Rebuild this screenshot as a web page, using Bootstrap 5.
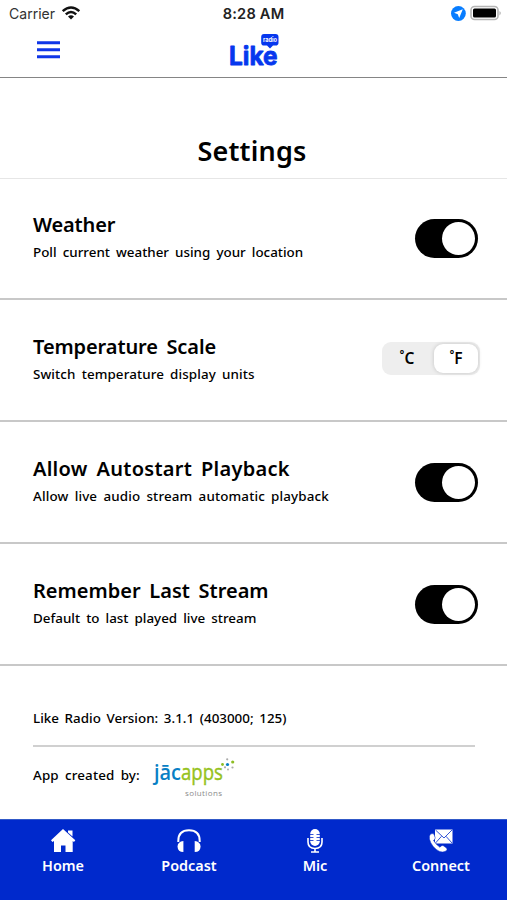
<!DOCTYPE html>
<html lang="en">
<head>
<meta charset="utf-8">
<meta name="viewport" content="width=device-width, initial-scale=1">
<title>Settings</title>
<link href="https://cdn.jsdelivr.net/npm/bootstrap@5.3.0/dist/css/bootstrap.min.css" rel="stylesheet">
<style>
body{font-family:"Noto Sans","Open Sans",sans-serif;color:#000;background:#fff;height:900px;overflow:hidden}
svg{display:block}
svg text{white-space:pre}
.status-bar{height:28px;font-family:Inter,"Liberation Sans",sans-serif;font-size:14.6px;color:#222}
.side{width:190px}
.status-time{font-weight:600;font-size:14.6px;letter-spacing:.2px;padding-top:1px}
.app-bar{height:50px;border-bottom:1px solid #858585}
.menu-btn{margin-left:37px}
.page-title{height:101px;border-bottom:1px solid #e6e6e6;padding-top:51px}
.page-title h1{font-size:27px;font-weight:600;line-height:44px;letter-spacing:.2px;margin-right:3px}
.setting{height:122px;border-bottom:2px solid #c8c8c8;padding:33px 29px 0 33px}
.setting.first{height:121px;padding-top:32px}
.setting h2{font-size:20px;line-height:28px;font-weight:600;margin:0;white-space:nowrap;word-spacing:3.5px}
.setting.first h2{letter-spacing:-.15px}
.setting p,.info{font-size:13.4px;line-height:20px;font-weight:500;white-space:nowrap;word-spacing:2.6px}
.setting p{margin-top:3px}
.temperature h2{letter-spacing:-.1px}
.temperature p{letter-spacing:.1px}
.autostart h2{letter-spacing:.26px}
.autostart p{letter-spacing:.14px}
.toggle{width:63px;height:39px;border-radius:20px;background:#000;padding:3px;margin-top:8px}
.knob{width:33px;height:33px;border-radius:50%;background:#fff}
.units{width:98px;height:33px;border-radius:9px;background:#eee;margin-top:9px;padding:2px;margin-right:-2px;font-size:15.5px;font-weight:600}
.units .on{background:#fff;border-radius:9px;box-shadow:0 0 4px rgba(0,0,0,.18);flex:0 0 44px}
.unit-c{padding-right:4px}
.info-row{margin:0 32px 0 33px}
.version{height:81px;border-bottom:2px solid #d0d0d0;padding-top:42px;word-spacing:2.2px}
.credit{padding-top:18px;letter-spacing:.14px}
.maker{margin-left:10px}
.tabs{height:81px;background:#0029cc;border-top:1px solid #3159c8;padding:7px 3px 0 0;color:#fff;font-weight:600;font-size:14.4px;line-height:20px}
.tabs svg{margin-bottom:1px}
</style>
</head>
<body class="d-flex flex-column">
<div class="status-bar d-flex align-items-center justify-content-between">
  <div class="side d-flex align-items-center ps-2">
    <svg width="76" height="28" viewBox="0 0 76 28"><text x="1" y="18.7" font-size="14.5" fill="#333" textLength="46" lengthAdjust="spacingAndGlyphs">Carrier</text>
    <g fill="none" stroke="#111" stroke-width="2.5"><path d="M54.7 11.1Q63 3.9 71.3 11.1"/><path d="M57.8 14.4Q63 9.7 68.2 14.4"/></g><path d="M60 16.5Q63 14.1 66 16.5L63 19.6Z" fill="#111"/></svg>
  </div>
  <span class="status-time">8:28 AM</span>
  <div class="side d-flex justify-content-end pe-1">
    <svg width="54" height="28" viewBox="449 0 54 28"><circle cx="458.4" cy="13.5" r="7.4" fill="#087dff"/><path d="M462.8 9.2L459.2 18L457.8 14.2L454 12.8Z" fill="#fff"/><rect x="471" y="6.5" width="27" height="13" rx="3.5" fill="#fff" stroke="#b5b5b5" stroke-width="1.6"/><rect x="473" y="8.5" width="23" height="9" rx="1.5" fill="#000"/><path d="M499.5 11Q502 13 499.5 15.4Z" fill="#aaa"/></svg>
  </div>
</div>
<header class="app-bar d-flex align-items-start justify-content-between">
  <div class="side"><svg class="menu-btn" width="24" height="44" viewBox="0 0 24 44"><path d="M0 14.7H23M0 21.7H23M0 28.7H23" stroke="#0f36e8" stroke-width="3"/></svg></div>
  <svg width="54" height="44" viewBox="227 28 54 44">
    <text x="229" y="64.5" font-family="Inter,sans-serif" font-weight="700" font-size="25" fill="#0637ee" stroke="#0637ee" stroke-width=".8" stroke-linejoin="round" textLength="48.5" lengthAdjust="spacingAndGlyphs">Like</text>
    <path d="M264 34H275.5Q278.5 34 278.5 37V42.7Q278.5 45.5 275.5 45.5H273L270 48.5L267 45.5H264Q261.2 45.5 261.2 42.7V37Q261.2 34 264 34Z" fill="#0637ee"/>
    <text x="263" y="42.3" font-family="Inter,sans-serif" font-weight="700" font-size="6" fill="#fff" textLength="14" lengthAdjust="spacingAndGlyphs">radio</text>
  </svg>
  <div class="side"></div>
</header>
<main class="flex-grow-1">
  <div class="page-title text-center"><h1 class="mt-0 mb-0">Settings</h1></div>
  <section class="setting first d-flex justify-content-between"><div><h2>Weather</h2><p class="mb-0">Poll current weather using your location</p></div><div class="toggle d-flex justify-content-end"><div class="knob"></div></div></section>
  <section class="setting temperature d-flex justify-content-between"><div><h2>Temperature Scale</h2><p class="mb-0">Switch temperature display units</p></div><div class="units d-flex"><div class="unit-c flex-fill d-flex align-items-center justify-content-center">˚C</div><div class="on d-flex align-items-center justify-content-center">˚F</div></div></section>
  <section class="setting autostart d-flex justify-content-between"><div><h2>Allow Autostart Playback</h2><p class="mb-0">Allow live audio stream automatic playback</p></div><div class="toggle d-flex justify-content-end"><div class="knob"></div></div></section>
  <section class="setting d-flex justify-content-between"><div><h2>Remember Last Stream</h2><p class="mb-0">Default to last played live stream</p></div><div class="toggle d-flex justify-content-end"><div class="knob"></div></div></section>
  <div class="info-row version info">Like Radio Version: 3.1.1 (403000; 125)</div>
  <div class="info-row info d-flex"><span class="credit">App created by:</span>
    <svg class="maker" width="94" height="60" viewBox="150 747 94 60"><g font-family="Open Sans,sans-serif"><text x="154" y="780" font-size="22" font-weight="600" fill="#087fc5" textLength="27" lengthAdjust="spacingAndGlyphs">jāc</text><text x="181" y="780" font-size="22" fill="#96c21d" stroke="#96c21d" stroke-width=".4" textLength="42" lengthAdjust="spacingAndGlyphs">apps</text><text x="185" y="796" font-size="8" fill="#8c8c8c" textLength="37">solutions</text></g><g fill="#8dbd22"><circle cx="222.5" cy="764.5" r="1.4"/><circle cx="232.7" cy="762" r="1.6"/></g><circle cx="227.5" cy="764.5" r="1.6" fill="#087fc5"/><g fill="#aaa"><circle cx="227.2" cy="759.3" r="1.1"/><circle cx="232.5" cy="767.5" r="1.1"/><circle cx="225" cy="767.3" r="1.1"/><circle cx="228" cy="769.5" r=".9"/></g></svg>
  </div>
</main>
<nav class="tabs d-flex">
  <div class="col-3 text-center"><svg class="mx-auto" width="28" height="28" viewBox="49 827 28 28"><path d="M63 829L75.3 840.3L74 842L72.7 841V852H65.5V845.5H61V852H54V841L52.5 842L51 840.3ZM68 830.5H72.5V836.5L68 832.4Z" fill="#fff"/></svg>Home</div>
  <div class="col-3 text-center"><svg class="mx-auto" width="28" height="28" viewBox="175 827 28 28"><path d="M178.3 842V841Q178.3 830.3 189 830.3Q199.7 830.3 199.7 841V842" fill="none" stroke="#fff" stroke-width="2"/><path d="M183.4 841V852Q177.8 852 177.5 846.5Q177.8 841.5 183.4 841ZM194.7 841V852Q200.3 852 200.6 846.5Q200.3 841.5 194.7 841Z" fill="#fff"/></svg>Podcast</div>
  <div class="col-3 text-center"><svg class="mx-auto" width="28" height="28" viewBox="301 827 28 28"><rect x="310.2" y="829" width="9.6" height="17" rx="4.8" fill="#fff"/><path d="M308 838V842Q308 848.5 315 848.5Q322 848.5 322 842V838M315 848.5V852M311 852H319" fill="none" stroke="#fff" stroke-width="1.6"/><path d="M310 834.5H313.5M310 837.5H313.5M310 840.5H313.5M316.5 834.5H320M316.5 837.5H320M316.5 840.5H320" stroke="#0029cc" stroke-width=".8"/></svg>Mic</div>
  <div class="col-3 text-center"><svg class="mx-auto" width="28" height="28" viewBox="427 827 28 28"><path d="M435 829.5H452.5V843.5H435Z" fill="#fff"/><path d="M435.5 830L444 838L452 830M435.5 843L441.5 836.3M452 843L446 836.3" stroke="#0029cc" stroke-width=".8" fill="none"/><path d="M430.5 834Q433.5 832.7 434.3 835L435.2 837.8Q435.5 839 433.5 840.4Q435.7 844.5 440 847.3Q441.5 845 443 845.5L446.5 848Q448 849.5 445.5 851.3Q440 854 433.2 846.5Q427 838 430.5 834Z" fill="#fff" stroke="#0029cc" stroke-width=".5"/></svg>Connect</div>
</nav>
<script src="https://cdn.jsdelivr.net/npm/bootstrap@5.3.0/dist/js/bootstrap.bundle.min.js"></script>
</body>
</html>
